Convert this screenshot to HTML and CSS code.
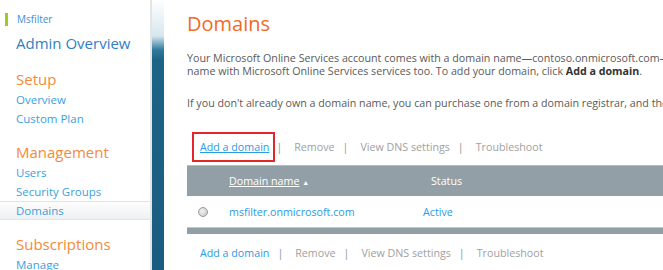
FILE: index.html
```html
<!DOCTYPE html>
<html lang="en">
<head>
    <meta charset="UTF-8">
    <title>Domains</title>
    <link rel="stylesheet" href="styles.css">
</head>
<body>
    <aside class="sidebar">
        <div class="tenant">Msfilter</div>
        <a class="overview" href="#">Admin Overview</a>

        <h3>Setup</h3>
        <a class="nav" href="#">Overview</a>
        <a class="nav" href="#">Custom Plan</a>

        <h3>Management</h3>
        <a class="nav" href="#">Users</a>
        <a class="nav" href="#">Security Groups</a>
        <a class="nav active" href="#">Domains</a>

        <h3>Subscriptions</h3>
        <a class="nav" href="#">Manage</a>
    </aside>

    <div class="stripe"></div>

    <main class="content">
        <h1>Domains</h1>
        <p class="intro">Your Microsoft Online Services account comes with a domain name—contoso.onmicrosoft.com—but you can also use your own domain<br>name with Microsoft Online Services services too. To add your domain, click <b>Add a domain</b>.</p>
        <p class="intro">If you don't already own a domain name, you can purchase one from a domain registrar, and then come back to add it.</p>

        <div class="actions">
            <a class="add boxed" href="#">Add a domain</a>
            <span class="sep">|</span>
            <span class="off">Remove</span>
            <span class="sep">|</span>
            <span class="off">View DNS settings</span>
            <span class="sep">|</span>
            <span class="off">Troubleshoot</span>
        </div>

        <div class="grid">
            <div class="grid-head">
                <span class="col-pick"></span>
                <span class="col-name"><u>Domain name</u> <small>▲</small></span>
                <span class="col-status">Status</span>
            </div>
            <div class="grid-row">
                <span class="col-pick"><i class="radio"></i></span>
                <a class="col-name" href="#">msfilter.onmicrosoft.com</a>
                <span class="col-status link">Active</span>
            </div>
            <div class="grid-foot"></div>
        </div>

        <div class="actions bottom">
            <a class="add" href="#">Add a domain</a>
            <span class="sep">|</span>
            <span class="off">Remove</span>
            <span class="sep">|</span>
            <span class="off">View DNS settings</span>
            <span class="sep">|</span>
            <span class="off">Troubleshoot</span>
        </div>
    </main>
</body>
</html>
```

FILE: styles.css
```css
* {
    margin: 0;
    padding: 0;
    box-sizing: border-box;
}

body {
    display: flex;
    height: 270px;
    overflow: hidden;
    background: #fff;
    font-family: 'Open Sans', 'Noto Sans', sans-serif;
    color: #5a5a5a;
}

a {
    text-decoration: none;
}

/* Left navigation */
.sidebar {
    width: 152px;
    flex: none;
    border-right: 2px solid #e3e6e8;
    padding-top: 13px;
    overflow: hidden;
}

.tenant {
    margin-left: 5px;
    padding-left: 9px;
    border-left: 3px solid #9ccc1c;
    font-size: 10px;
    line-height: 13px;
    color: #3d8fd0;
}

.overview {
    display: block;
    margin: 7px 0 0 16px;
    font-size: 15px;
    line-height: 20px;
    color: #2f80c3;
}

.sidebar h3 {
    margin: 14px 0 1px 16px;
    font-size: 15px;
    font-weight: 400;
    line-height: 20px;
    color: #f48a3a;
}

.overview + h3 {
    margin-top: 16px;
}

.nav {
    display: block;
    padding-left: 16px;
    font-size: 11.5px;
    line-height: 19px;
    color: #3a9fe0;
    white-space: nowrap;
}

.nav.active {
    background: linear-gradient(#fdfdfd, #eef1f3);
    border-top: 1px solid #d7e6f0;
    border-bottom: 1px solid #d7e6f0;
    line-height: 17px;
}

/* Blue separator stripe */
.stripe {
    width: 12px;
    flex: none;
    background: linear-gradient(#ffffff 0px, #d7e6ee 36px, #2d7a9f 50px, #1d6386 60px, #1a5c80 100%);
}

/* Main content */
.content {
    flex: 1;
    min-width: 0;
    padding: 10px 0 0 23px;
    overflow: hidden;
}

h1 {
    font-size: 20px;
    font-weight: 400;
    line-height: 28px;
    color: #f26a1f;
    margin-bottom: 14px;
}

.intro {
    white-space: nowrap;
    font-size: 10.7px;
    line-height: 13px;
    margin-bottom: 19px;
}

.intro b {
    color: #333;
}

.actions {
    display: flex;
    align-items: center;
    gap: 8px;
    font-size: 10.7px;
    line-height: 14px;
    margin-top: 23px;
    padding-left: 13px;
    height: 27px;
    white-space: nowrap;
}

.actions .add {
    color: #2b9be3;
}

.actions .boxed {
    text-decoration: underline;
    outline: 2px solid #e4262c;
    padding: 6px 4px 6px 6px;
    margin: 0 -5px 0 -6px;
}

.sep {
    color: #8b9297;
    margin-right: 4px;
}

.off {
    color: #a0a0a0;
}

.grid {
    margin-top: 5px;
}

.grid-head,
.grid-row {
    display: flex;
    align-items: center;
    font-size: 10.7px;
    white-space: nowrap;
}

.grid-head {
    height: 31px;
    background: #939fa6;
    border-top: 1px solid #b6bec3;
    color: #fff;
}

.grid-head small {
    font-size: 7px;
}

.grid-row {
    height: 31px;
}

.col-pick {
    width: 42px;
    flex: none;
    padding-left: 11px;
    display: flex;
}

.col-name {
    width: 202px;
    flex: none;
    color: #2b9be3;
}

.grid-head .col-name {
    color: #fff;
}

.col-status.link {
    color: #2b9be3;
    margin-left: -8px;
}

.radio {
    width: 10px;
    height: 10px;
    border-radius: 50%;
    border: 1px solid #9a9a9a;
    background: radial-gradient(circle at 40% 40%, #f2f2f2, #c2c2c2);
}

.grid-foot {
    height: 7px;
    background: #939fa6;
    border-top: 1px solid #c0c7cb;
}

.actions.bottom {
    margin-top: 5px;
}
```
